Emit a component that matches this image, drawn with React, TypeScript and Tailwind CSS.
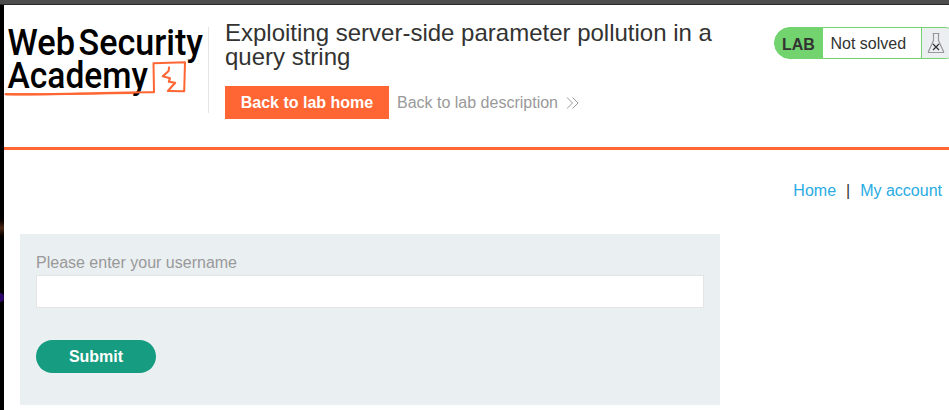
function Logo() {
  return (
    <svg width="204" height="86" viewBox="4 22 204 86" className="block shrink-0 overflow-visible" aria-label="Web Security Academy">
      <g fill="#000" fontFamily="Roboto, sans-serif" fontWeight="500" fontSize="37.500">
        <text x="7.500" y="55.200" textLength="67.500" lengthAdjust="spacingAndGlyphs">Web</text>
        <text x="78.500" y="55.200" textLength="124.500" lengthAdjust="spacingAndGlyphs">Security</text>
        <text x="7.500" y="88.200" textLength="140.500" lengthAdjust="spacingAndGlyphs">Academy</text>
      </g>
      <g fill="none" stroke="#ff6633" strokeLinejoin="round" strokeLinecap="round">
        <path d="M5.500 94.200C28 94.800 55 94 80 93.500S128 92 154 92.200L153.500 63.200L185 62.200L184.200 91.200L167.800 91" strokeWidth="2" />
        <path d="M6 94.200C40 95 80 93.600 133 93" strokeWidth="2.200" />
        <path d="M169 67.500L168.600 71L162.800 76.200L170 78.200L168.800 81.800L175.200 82.800L168.500 90.300" strokeWidth="2.100" />
      </g>
    </svg>
  );
}

function Flask() {
  return (
    <svg width="18" height="22" viewBox="0 0 18 22" className="block" fill="none">
      <path d="M5.500 1.500H12.500M6.500 2V8.500L1.500 19.500V20.500H16.500V19.500L11.500 8.500V2" stroke="#999" strokeWidth="1.200" />
      <path d="M6 12L12 18M12 12L6 18" stroke="#333" strokeWidth="1.300" />
    </svg>
  );
}

export default function App() {
  return (
    <div className="flex h-[410px] w-[949px] flex-col overflow-hidden bg-white font-['Liberation_Sans',Arial,sans-serif] text-base text-[#333332]">
      <div className="h-[5px] shrink-0 border-b border-[#292929] bg-[#4d4d4d]" />
      <div className="flex min-h-0 flex-1">
        <div className="flex w-1 shrink-0 flex-col bg-black">
          <div className="mt-[211px] h-6 bg-linear-to-b from-black via-[#4a2814] to-black" />
          <div className="mt-[53px] h-[9px] rounded-r-full bg-[#2c0568]" />
        </div>
        <div className="flex min-w-0 flex-1 flex-col">
          <header className="flex h-[145px] shrink-0 border-b-[3px] border-[#ff6633] pt-[17px]">
            <Logo />
            <div className="mt-[5px] h-[86px] w-px shrink-0 bg-[#e4e4e4]" />
            <div className="ml-4 w-[520px] shrink-0">
              <h2 className="-mt-px text-2xl leading-6">
                Exploiting server-side parameter pollution in a query string
              </h2>
              <div className="mt-[17px] flex items-center">
                <a className="flex h-[33px] w-[164px] items-center justify-center bg-[#ff6633] font-bold text-white">Back to lab home</a>
                <a className="ml-2 flex items-center text-[#999]">
                  Back to lab description
                  <svg width="14" height="12" viewBox="0 0 14 12" className="ml-2" fill="none" stroke="#999" strokeWidth="1">
                    <path d="M1 .5L6.500 6L1 11.500M6.500 .5L12 6L6.500 11.500" />
                  </svg>
                </a>
              </div>
            </div>
            <div className="ml-[29px] mt-[5px] flex h-8 w-[187px] shrink-0 overflow-hidden rounded-full border border-[#72d36f] bg-[#72d36f]">
              <div className="flex w-12 items-center bg-[#72d36f] pl-[7px] pt-[3px] font-bold">LAB</div>
              <div className="flex w-[98px] items-center bg-white pl-[7.5px] pt-px">Not solved</div>
              <div className="flex flex-1 items-center border-l border-[#72d36f] bg-[#ebeff2] pl-[5px]">
                <Flask />
              </div>
            </div>
          </header>
          <nav className="mt-8 flex h-[17px] items-center justify-end pr-[7px] leading-none">
            <a className="text-[#29abe2]">Home</a>
            <span className="mx-[10px]">|</span>
            <a className="text-[#29abe2]">My account</a>
          </nav>
          <form className="ml-4 mt-[35px] flex h-[171px] w-[700px] shrink-0 flex-col bg-[#eaeff2] px-4 pt-[19px]" onSubmit={(e) => e.preventDefault()}>
            <label htmlFor="username" className="h-[22px] leading-[20px] text-[#999]">Please enter your username</label>
            <input id="username" className="h-[33px] w-full border border-[#e4e4e4] bg-white px-2 outline-none" />
            <button className="mt-8 h-[33px] w-[120px] rounded-full bg-[#169c80] font-bold text-white">Submit</button>
          </form>
        </div>
      </div>
    </div>
  );
}
